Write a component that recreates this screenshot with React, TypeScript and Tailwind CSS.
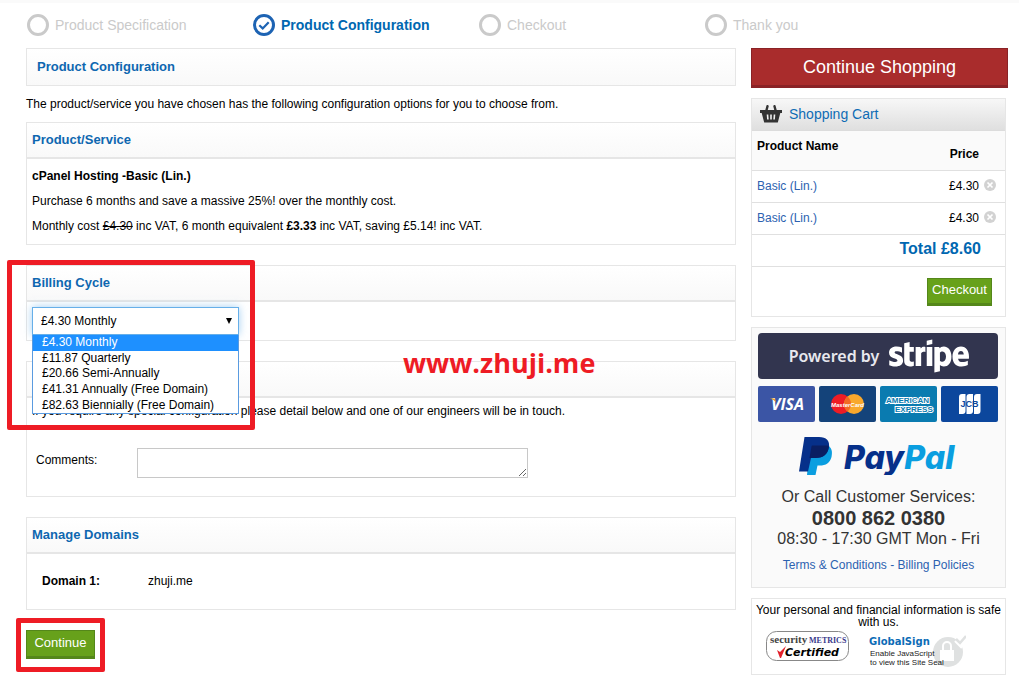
import React, { useState } from 'react'
import { FaStripe } from 'react-icons/fa'

interface CartItem {
  id: number
  name: string
  price: string
}

const STEPS = ['Product Specification', 'Product Configuration', 'Checkout', 'Thank you']
const ACTIVE_STEP = 1

const CYCLES = [
  '£4.30 Monthly',
  '£11.87 Quarterly',
  '£20.66 Semi-Annually',
  '£41.31 Annually (Free Domain)',
  '£82.63 Biennially (Free Domain)',
]

const CART: CartItem[] = [
  { id: 1, name: 'Basic (Lin.)', price: '£4.30' },
  { id: 2, name: 'Basic (Lin.)', price: '£4.30' },
]

function StepIcon({ active }: { active: boolean }) {
  return (
    <svg className="w-6 h-6 shrink-0" viewBox="0 0 24 24" fill="none" stroke={active ? '#1d63b3' : '#cacaca'} strokeWidth="3">
      <circle cx="12" cy="12" r="9.5" />
      {active && <path d="M7.3 12.2l3.4 3.2 6-6.2" strokeWidth="2.2" />}
    </svg>
  )
}

function Steps() {
  return (
    <nav aria-label="Order progress">
      <ol className="flex pl-[26px]">
        {STEPS.map((step, i) => (
          <li
            key={step}
            className={
              i === ACTIVE_STEP
                ? 'flex w-[226px] items-center gap-[5px] text-sm leading-6 font-bold text-[#0067b1]'
                : 'flex w-[226px] items-center gap-[5px] text-sm leading-6 text-[#cacaca]'
            }
          >
            <StepIcon active={i === ACTIVE_STEP} />
            {step}
          </li>
        ))}
      </ol>
    </nav>
  )
}

interface PanelProps {
  title?: string
  children: React.ReactNode
}

function Panel({ title, children }: PanelProps) {
  return (
    <section className="relative border border-[#e6e6e6]">
      <header className="flex h-9 items-center border-b-2 border-[#e6e6e6] bg-linear-to-b from-white to-[#f9f9f9] pl-[5px]">
        {title && <h2 className="text-[13px] font-bold text-[#0e67b0]">{title}</h2>}
      </header>
      {children}
    </section>
  )
}

function BillingCycle() {
  const [cycle, setCycle] = useState(CYCLES[0])
  const [open, setOpen] = useState(true)

  return (
    <div className="p-[5px]">
      <div className="relative w-[207px]">
        <select
          aria-label="Billing Cycle"
          value={cycle}
          onChange={e => setCycle(e.target.value)}
          onClick={() => setOpen(!open)}
          className="block h-7 w-full appearance-none border border-[#66afe9] bg-white px-2 text-xs shadow-[0_0_8px_rgba(102,175,233,0.6)] outline-none"
        >
          {CYCLES.map(c => (
            <option key={c}>{c}</option>
          ))}
        </select>
        <svg className="pointer-events-none absolute top-[11px] right-[7px] h-[6px] w-[6px]" viewBox="0 0 6 6">
          <path d="M0 0h6L3 6z" fill="#000" />
        </svg>
        {open && (
          <ul role="listbox" className="absolute top-full left-0 z-10 flex h-[79px] w-full flex-col border border-t-0 border-[#5a9be0] bg-white text-xs">
            {CYCLES.map(c => (
              <li
                key={c}
                role="option"
                aria-selected={c === cycle}
                onClick={() => {
                  setCycle(c)
                  setOpen(false)
                }}
                className={
                  c === cycle
                    ? 'flex flex-1 items-center bg-[#1e90ff] pl-[9px] leading-[15px] text-white'
                    : 'flex flex-1 items-center pl-[9px] leading-[15px]'
                }
              >
                {c}
              </li>
            ))}
          </ul>
        )}
      </div>
    </div>
  )
}

function BasketIcon() {
  return (
    <svg className="h-[18px] w-[22px]" viewBox="0 0 22 18" fill="none">
      <path d="M6 7L7.5 1.2M16 7L14.500 1.200" stroke="#333" strokeWidth="2.4" strokeLinecap="round" />
      <path d="M0 5h22v3h-1.700L17.800 17.500H4.200L1.700 8H0z" fill="#333" />
      <path d="M7.500 9.500l.4 5M11 9.500v5M14.500 9.500l-.4 5" stroke="#f0f0f0" strokeWidth="1.600" />
    </svg>
  )
}

function Cart() {
  const [items, setItems] = useState(CART)

  return (
    <section className="border border-[#e6e6e6]">
      <h2 className="flex h-8 items-center gap-[7px] border-b border-[#dcdcdc] bg-linear-to-b from-[#f7f7f7] to-[#dfdfdf] pb-[1px] pl-2 text-sm text-[#0f6cb5]">
        <BasketIcon />
        Shopping Cart
      </h2>
      <table className="w-full border-collapse text-xs leading-4">
        <thead>
          <tr className="h-[39px] border-b border-[#e0e0e0] bg-[#fafafa]">
            <th className="pt-[7px] pl-[5px] text-left align-top">Product Name</th>
            <th className="pt-[7px] text-right">Price</th>
            <td className="w-[26px]" />
          </tr>
        </thead>
        <tbody>
          {items.map(item => (
            <tr key={item.id} className="h-8 border-b border-[#e0e0e0]">
              <td className="pl-[5px]">
                <a href="#" className="text-[#2c62b0]">{item.name}</a>
              </td>
              <td className="text-right">{item.price}</td>
              <td className="w-[26px] pl-[5px]">
                <button
                  aria-label="Remove item"
                  onClick={() => setItems(items.filter(i => i.id !== item.id))}
                  className="block pb-[3px]"
                >
                  <svg className="h-3 w-3" viewBox="0 0 12 12">
                    <circle cx="6" cy="6" r="6" fill="#d2d2d2" />
                    <path d="M3.500 3.500l5 5M8.500 3.500l-5 5" stroke="#fff" strokeWidth="1.700" />
                  </svg>
                </button>
              </td>
            </tr>
          ))}
        </tbody>
        <tfoot>
          <tr className="h-8 border-b border-[#e0e0e0]">
            <td colSpan={3} className="pr-6 pb-[2px] text-right text-base leading-5 font-bold text-[#0067b1]">
              Total £8.60
            </td>
          </tr>
        </tfoot>
      </table>
      <div className="flex justify-end pt-[11px] pr-[13px] pb-[10px]">
        <button className="h-7 w-[65px] border border-b-3 border-[#54871a] bg-[#67a11b] pb-[2px] text-[13px] text-white">Checkout</button>
      </div>
    </section>
  )
}

function CardLogos() {
  return (
    <div className="mt-[7px] grid grid-cols-4 gap-1">
      <svg className="h-9 w-full" viewBox="0 0 57 36" role="img" aria-label="Visa">
        <rect width="57" height="36" rx="2" fill="#3b55a5" />
        <text x="13" y="24" fill="#fff" fontFamily="Open Sans, sans-serif" fontSize="16" fontWeight="700" fontStyle="italic">VISA</text>
        <path d="M12 12.500h4.500l2 4.500c-2-2.500-4-3.800-6.500-4.500z" fill="#f3a11b" />
      </svg>
      <svg className="h-9 w-full" viewBox="0 0 57 36" role="img" aria-label="MasterCard">
        <rect width="57" height="36" rx="2" fill="#14437a" />
        <circle cx="22" cy="18" r="10" fill="#ee1c25" />
        <circle cx="35" cy="18" r="10" fill="#f9a82c" />
        <path d="M28.500 10.400a10 10 0 0 1 0 15.200a10 10 0 0 1 0-15.200z" fill="#f26a22" />
        <text x="28.500" y="21" fill="#fff" fontFamily="Liberation Sans, sans-serif" fontSize="6" fontWeight="700" fontStyle="italic" textAnchor="middle">MasterCard</text>
      </svg>
      <svg className="h-9 w-full" viewBox="0 0 57 36" role="img" aria-label="American Express">
        <rect width="57" height="36" rx="2" fill="#0a7bb0" />
        <g fill="#0a7bb0" stroke="#fff" strokeWidth="2" paintOrder="stroke" fontFamily="Liberation Sans, sans-serif" fontSize="8" fontWeight="700">
          <text x="6" y="17">AMERICAN</text>
          <text x="15" y="26">EXPRESS</text>
        </g>
      </svg>
      <svg className="h-9 w-full" viewBox="0 0 57 36" role="img" aria-label="JCB">
        <rect width="57" height="36" rx="2" fill="#0c479d" />
        <g fill="#fff">
          <path d="M21 8h3.500v17a3 3 0 0 1-3 3H18V11a3 3 0 0 1 3-3z" />
          <path d="M28.500 8H32v17a3 3 0 0 1-3 3h-3.500V11a3 3 0 0 1 3-3z" />
          <path d="M36 8h3.500v17a3 3 0 0 1-3 3H33V11a3 3 0 0 1 3-3z" />
        </g>
        <text x="28.500" y="21" fill="#0c479d" fontFamily="Liberation Sans, sans-serif" fontSize="9" fontWeight="700" textAnchor="middle">JCB</text>
      </svg>
    </div>
  )
}

function PayPalLogo() {
  return (
    <svg className="mx-auto mt-[15px] h-[38px] w-[160px]" viewBox="0 0 160 38" role="img" aria-label="PayPal">
      <path d="M11 9h19c3 3 3.500 6 2.500 11c-1.500 6-5.500 8.500-12 8.500h-2L16.500 38H8z" fill="#0a9ee0" />
      <path d="M5.500 0H20c7.500 0 11 4 10 10.500C28.500 18 23.500 21 16.500 21H12L9 34.500H0z" fill="#06308a" />
      <path d="M12.500 9.500c0-.5.500-1 1.500-1h14c1 0 1.500.5 1.800 1C29 17.500 24 21 16.500 21H10.500z" fill="#0a1f62" />
      <text x="45" y="32" fontFamily="Inter, sans-serif" fontSize="32" fontWeight="800" fontStyle="italic">
        <tspan fill="#06308a">Pay</tspan>
        <tspan fill="#0a9ee0">Pal</tspan>
      </text>
    </svg>
  )
}

function Payment() {
  return (
    <section className="flex flex-col border border-[#e6e6e6] bg-[#fafafa] px-[6px] pt-[5px] pb-[14px] text-center text-base leading-5 text-[#333]">
      <div className="mr-[1px]">
        <div className="flex h-[46px] items-center justify-center gap-[10px] rounded bg-[#32354f] pl-[2px] font-['Noto_Sans',sans-serif] text-base font-semibold text-[#e8e8ee]">
          Powered by
          <FaStripe className="h-20 w-20 text-white" aria-label="stripe" />
        </div>
        <CardLogos />
      </div>
      <PayPalLogo />
      <p className="mt-3">Or Call Customer Services:</p>
      <p className="text-xl leading-[22px] font-bold">0800 862 0380</p>
      <p>08:30 - 17:30 GMT Mon - Fri</p>
      <p className="mt-2 text-xs leading-4 text-[#2c62b0]">
        <a href="#">Terms &amp; Conditions</a> - <a href="#">Billing Policies</a>
      </p>
    </section>
  )
}

function Seals() {
  return (
    <section className="border border-[#e6e6e6] pt-[5px] pb-[6px] text-center text-xs leading-3">
      <p>Your personal and financial information is safe with us.</p>
      <div className="mt-[3px] flex gap-5 pl-[14px]">
        <svg className="h-[31px] w-[83px]" viewBox="0 0 83 31" role="img" aria-label="Security Metrics Certified">
          <rect x=".5" y=".5" width="82" height="29" rx="10" fill="#fff" stroke="#888" />
          <g fontFamily="Liberation Serif, serif" fontWeight="700">
            <text x="4" y="12" fontSize="11" fill="#444">security</text>
            <text x="43" y="12" fontSize="8" fill="#3b3a8c">METRICS</text>
          </g>
          <text x="19" y="25" fontFamily="DejaVu Sans, sans-serif" fontSize="11" fontWeight="700" fontStyle="italic" fill="#000">Certified</text>
          <path d="M11 19l3 2 6-6-5 12h-1z" fill="#e3202b" />
        </svg>
        <svg className="h-[37px] w-[97px]" viewBox="0 0 97 37" role="img" aria-label="GlobalSign">
          <circle cx="79" cy="21" r="15" fill="#dfe1e1" />
          <path d="M87 9l5 5 10-12" stroke="#fff" strokeWidth="5" fill="none" />
          <path d="M87 8l4 4 6-7" stroke="#dfe1e1" strokeWidth="2.500" fill="none" />
          <rect x="71" y="19" width="14" height="11" fill="#fff" />
          <path d="M74 19v-4a4 4 0 0 1 8 0v4" stroke="#fff" strokeWidth="2" fill="none" />
          <text x="0" y="14" fontFamily="DejaVu Sans, sans-serif" fontSize="10" fontWeight="700" fill="#0c6cb6">GlobalSign</text>
          <g fontFamily="Liberation Sans, sans-serif" fontSize="8" fill="#222">
            <text x="1" y="25">Enable JavaScript</text>
            <text x="1" y="34">to view this Site Seal</text>
          </g>
        </svg>
      </div>
    </section>
  )
}

export default function App() {
  return (
    <div className="bg-white font-['Liberation_Sans',Arial,sans-serif] text-xs leading-4 text-black">
      <div className="mb-[10px] h-[3px] bg-[#fafafa]" />
      <Steps />
      <div className="mt-[11px] flex items-start gap-[15px] pr-[11px] pb-3 pl-[26px]">
        <main className="relative min-w-0 flex-1">
          <h1 className="flex h-[38px] items-center border border-[#e6e6e6] bg-linear-to-b from-white to-[#f9f9f9] pl-[10px] text-[13px] font-bold text-[#0e67b0]">
            Product Configuration
          </h1>
          <p className="py-[10px]">The product/service you have chosen has the following configuration options for you to choose from.</p>

          <div className="flex flex-col gap-5">
            <Panel title="Product/Service">
              <div className="flex flex-col gap-[9px] pt-[9px] pb-[10px] pl-[5px]">
                <p className="font-bold">cPanel Hosting -Basic (Lin.)</p>
                <p>Purchase 6 months and save a massive 25%! over the monthly cost.</p>
                <p>
                  Monthly cost <s>£4.30</s> inc VAT, 6 month equivalent <b>£3.33</b> inc VAT, saving £5.14! inc VAT.
                </p>
              </div>
            </Panel>

            <Panel title="Billing Cycle">
              <BillingCycle />
              <div className="pointer-events-none absolute -top-[6px] -left-5 z-20 h-[170px] w-[248px] rounded-xs border-5 border-[#ee1c25]" />
            </Panel>

            <Panel>
              <div className="pt-[5px] pb-[18px]">
                <p className="pl-[5px]">
                  If you require any special configuration please detail below and one of our engineers will be in touch.
                </p>
                <div className="mt-[29px] flex pl-[9px]">
                  <label htmlFor="comments" className="w-[101px] pt-1">Comments:</label>
                  <textarea id="comments" className="block h-[30px] w-[391px] border border-[#c8c8c8] bg-white" />
                </div>
              </div>
            </Panel>

            <Panel title="Manage Domains">
              <dl className="flex pt-[19px] pb-5 pl-[15px]">
                <dt className="w-[106px] font-bold">Domain 1:</dt>
                <dd>zhuji.me</dd>
              </dl>
            </Panel>

            <div className="relative w-[69px]">
              <button className="block h-[29px] w-full border border-b-3 border-[#54871a] bg-[#67a11b] pb-[2px] text-[13px] text-white">Continue</button>
              <div className="pointer-events-none absolute -inset-x-[10px] -top-3 -bottom-[13px] rounded-xs border-5 border-[#ee1c25]" />
            </div>
          </div>

          <div className="pointer-events-none absolute top-[295px] left-[377px] font-['Open_Sans',sans-serif] text-[27px] leading-10 font-bold text-[#ee1c25]">
            www.zhuji.me
          </div>
        </main>

        <aside className="flex w-[257px] shrink-0 flex-col gap-[10px]">
          <button className="h-10 border border-b-3 border-[#8a2226] bg-[#a92c2c] text-lg leading-6 text-white">Continue Shopping</button>
          <div className="mr-[2px] flex flex-col gap-[10px]">
            <Cart />
            <Payment />
            <Seals />
          </div>
        </aside>
      </div>
    </div>
  )
}
